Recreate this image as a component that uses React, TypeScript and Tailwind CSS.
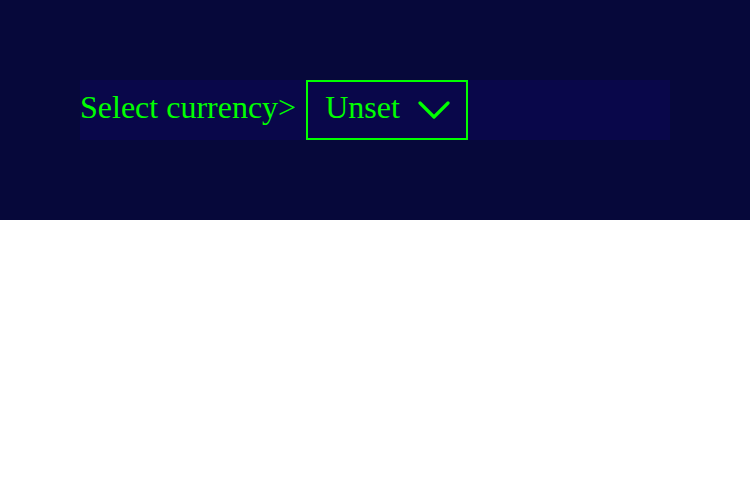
function CurrencyPicker() {
    return (
        <div className="flex items-center h-[60px] w-[590px] bg-[#09074a]">
            <span className="mb-[6px] text-[32px] leading-none text-[#00ff00]">Select currency&gt;</span>
            <button className="ml-[10px] flex items-center h-[60px] w-[162px] border-2 border-[#00ff00] pl-[17px] text-[32px] leading-none text-[#00ff00]">
                <span className="mb-[6px]">Unset</span>
                <svg className="ml-[18px]" width="34" height="22" viewBox="0 0 34 22" fill="none" stroke="#00ff00" strokeWidth="3.2" strokeLinecap="round" strokeLinejoin="round">
                    <path d="M2 4 L16 18 L30 4"/>
                </svg>
            </button>
        </div>
    );
}

export default function App() {
    return (
        <div className="min-h-[500px] bg-white" style={{fontFamily: '"Liberation Serif", "Times New Roman", serif'}}>
            {/* Header band */}
            <div className="h-[220px] bg-[#06083a] px-[80px] pt-[80px]">
                <CurrencyPicker/>
            </div>
        </div>
    );
}
